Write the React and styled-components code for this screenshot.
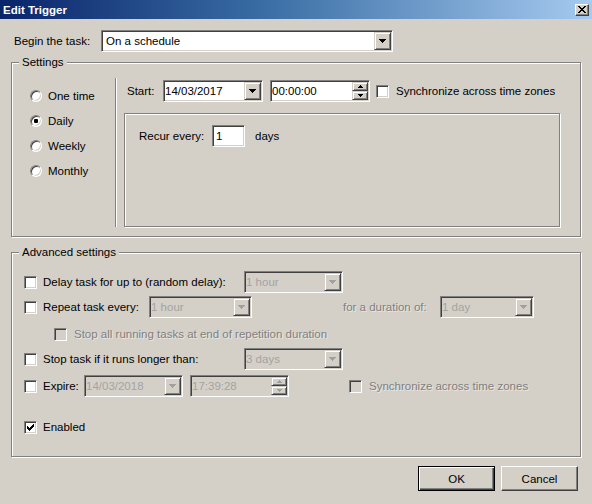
import React from "react";
import styled, { createGlobalStyle } from "styled-components";

const GlobalStyle = createGlobalStyle`
  html, body {
    margin: 0;
    padding: 0;
    background: #d4d0c8;
  }
  body {
    font-family: "Liberation Sans", Arial, sans-serif;
    font-size: 11.5px;
    color: #000;
  }
`;

const Window = styled.div`
  width: 592px;
  height: 504px;
  background: #d4d0c8;
  display: flex;
  flex-direction: column;
  overflow: hidden;
`;

const TitleBar = styled.div`
  height: 19px;
  flex: none;
  display: flex;
  align-items: center;
  justify-content: space-between;
  padding: 0 3px;
  background: linear-gradient(to right, #0a246a 0%, #3a6ea5 45%, #a6caf0 100%);
  color: #fff;
  font-weight: bold;
  font-size: 11.5px;
`;

const CloseButton = styled.span`
  box-sizing: border-box;
  width: 14px;
  height: 12px;
  background: #d4d0c8;
  border: 1px solid;
  border-color: #fff #404040 #404040 #fff;
  box-shadow: inset -1px -1px 0 #808080;
  display: flex;
  align-items: center;
  justify-content: center;
`;

const Body = styled.div`
  padding: 0 11px;
  display: flex;
  flex-direction: column;
`;

const Row = styled.div`
  display: flex;
  align-items: center;
  height: 22px;
  flex: none;
  margin-top: ${(p) => p.$mt || 0}px;
  padding-left: ${(p) => p.$indent || 0}px;
`;

const Label = styled.span`
  box-sizing: border-box;
  flex: none;
  width: ${(p) => (p.$w ? `${p.$w}px` : "auto")};
  margin-left: ${(p) => p.$ml || 0}px;
  padding-left: ${(p) => p.$pl || 0}px;
  color: ${(p) => (p.$disabled ? "#808080" : "#000")};
  text-shadow: ${(p) => (p.$disabled ? "1px 1px 0 rgba(255,255,255,0.5)" : "none")};
  white-space: nowrap;
`;

const Field = styled.div`
  box-sizing: border-box;
  flex: none;
  width: ${(p) => p.$w}px;
  height: 22px;
  margin-left: ${(p) => p.$ml || 0}px;
  display: flex;
  align-items: stretch;
  padding: 1px;
  background: ${(p) => (p.$disabled ? "#d4d0c8" : "#fff")};
  border: 1px solid;
  border-color: #808080 #fff #fff #808080;
  box-shadow: inset 1px 1px 0 #404040, inset -1px -1px 0 #d4d0c8;
  color: ${(p) => (p.$disabled ? "#a3a3a3" : "#000")};
`;

const FieldText = styled.span`
  flex: 1;
  display: flex;
  align-items: center;
  padding-left: ${(p) => p.$pad || 0}px;
  white-space: nowrap;
  overflow: hidden;
`;

const DropButton = styled.span`
  box-sizing: border-box;
  flex: none;
  width: 17px;
  background: #d4d0c8;
  border: 1px solid;
  border-color: #d4d0c8 #404040 #404040 #d4d0c8;
  box-shadow: inset 1px 1px 0 #fff, inset -1px -1px 0 #808080;
  display: flex;
  align-items: center;
  justify-content: center;
`;

const SpinColumn = styled.span`
  flex: none;
  width: 16px;
  display: flex;
  flex-direction: column;
`;

const SpinButton = styled(DropButton)`
  width: 16px;
  flex: 1;
`;

const Group = styled.div`
  position: relative;
  flex: none;
  border: 1px solid #808080;
  box-shadow: inset 1px 1px 0 #fff, 1px 1px 0 #fff;
  margin-top: ${(p) => p.$mt || 0}px;
`;

const GroupLabel = styled.span`
  position: absolute;
  top: -8px;
  left: 7px;
  padding: 0 3px;
  line-height: 14px;
  background: #d4d0c8;
`;

const SettingsContent = styled.div`
  display: flex;
  padding: 15px 0 9px 18px;
`;

const RadioColumn = styled.div`
  width: 85px;
  flex: none;
  padding-top: 5px;
  display: flex;
  flex-direction: column;
`;

const RadioRow = styled.div`
  height: 25px;
  display: flex;
  align-items: center;
`;

const Radio = styled.span`
  box-sizing: border-box;
  width: 12px;
  height: 12px;
  flex: none;
  border-radius: 50%;
  background: #fff;
  border: 1px solid;
  border-color: #808080 #fff #fff #808080;
  box-shadow: inset 1px 1px 0 #404040, inset -1px -1px 0 #d4d0c8;
  display: flex;
  align-items: center;
  justify-content: center;
  margin-right: 6px;
`;

const RadioDot = styled.span`
  width: 4px;
  height: 4px;
  border-radius: 1px;
  background: #000;
`;

const Separator = styled.div`
  width: 0;
  height: 149px;
  flex: none;
  border-left: 1px solid #808080;
  border-right: 1px solid #fff;
`;

const RightColumn = styled.div`
  width: 437px;
  flex: none;
  margin-left: 7px;
  padding-top: 2px;
  display: flex;
  flex-direction: column;
`;

const Panel = styled.div`
  box-sizing: border-box;
  height: 114px;
  margin-top: 11px;
  border: 1px solid #808080;
  box-shadow: inset 1px 1px 0 #fff, 1px 1px 0 #fff;
  padding: 11px 0 0 14px;
  width: 436px;
`;

const CheckBox = styled.span`
  box-sizing: border-box;
  width: 13px;
  height: 13px;
  flex: none;
  margin-left: ${(p) => p.$ml || 0}px;
  border: 1px solid;
  border-color: #808080 #fff #fff #808080;
  box-shadow: inset 1px 1px 0 #404040, inset -1px -1px 0 #d4d0c8;
  background: ${(p) => (p.$disabled ? "#d4d0c8" : "#fff")};
  display: flex;
  align-items: center;
  justify-content: center;
`;

const AdvancedContent = styled.div`
  display: flex;
  flex-direction: column;
  padding: 18px 0 18px 12px;
`;

const ButtonBar = styled.div`
  display: flex;
  justify-content: flex-end;
  gap: 6px;
  margin-top: 9px;
  padding-right: 3px;
`;

const Button = styled.span`
  box-sizing: border-box;
  width: 77px;
  height: 25px;
  display: flex;
  align-items: center;
  justify-content: center;
  background: #d4d0c8;
  border: 1px solid;
  border-color: ${(p) => (p.$default ? "#000" : "#fff #404040 #404040 #fff")};
  box-shadow: ${(p) =>
    p.$default
      ? "inset 1px 1px 0 #fff, inset -1px -1px 0 #404040, inset -2px -2px 0 #808080"
      : "inset -1px -1px 0 #808080, inset 1px 1px 0 #d4d0c8"};
`;

const Arrow = ({ color = "#000" }) => (
  <svg width="7" height="4" viewBox="0 0 7 4">
    <path d="M0 0h7v1h-1v1h-1v1h-1v1h-1v-1h-1v-1h-1v-1h-1z" fill={color} />
  </svg>
);

const SmallArrow = ({ up, color = "#000" }) => (
  <svg width="5" height="3" viewBox="0 0 5 3">
    {up ? (
      <path d="M2 0h1v1h1v1h1v1h-5v-1h1v-1h1z" fill={color} />
    ) : (
      <path d="M0 0h5v1h-1v1h-1v1h-1v-1h-1v-1h-1z" fill={color} />
    )}
  </svg>
);

const CheckMark = () => (
  <svg width="7" height="7" viewBox="0 0 7 7">
    <path
      d="M0 2h1v3h-1zM1 3h1v3h-1zM2 4h1v3h-1zM3 3h1v3h-1zM4 2h1v3h-1zM5 1h1v3h-1zM6 0h1v3h-1z"
      fill="#000"
    />
  </svg>
);

const Combo = ({ w, ml, value, disabled, pad }) => (
  <Field $w={w} $ml={ml} $disabled={disabled}>
    <FieldText $pad={pad}>{value}</FieldText>
    <DropButton>
      <Arrow color={disabled ? "#a0a0a0" : "#000"} />
    </DropButton>
  </Field>
);

const Spinner = ({ w, ml, value, disabled }) => (
  <Field $w={w} $ml={ml} $disabled={disabled}>
    <FieldText>{value}</FieldText>
    <SpinColumn>
      <SpinButton>
        <SmallArrow up color={disabled ? "#a0a0a0" : "#000"} />
      </SpinButton>
      <SpinButton>
        <SmallArrow color={disabled ? "#a0a0a0" : "#000"} />
      </SpinButton>
    </SpinColumn>
  </Field>
);

const schedules = ["One time", "Daily", "Weekly", "Monthly"];

export default function App() {
  return (
    <>
      <GlobalStyle />
      <Window>
        <TitleBar>
          <span>Edit Trigger</span>
          <CloseButton>
            <svg width="8" height="7" viewBox="0 0 8 7">
              <path
                d="M0 0h2v1h1v1h2v-1h1v-1h2v1h-1v1h-1v1h-1v1h1v1h1v1h1v1h-2v-1h-1v-1h-2v1h-1v1h-2v-1h1v-1h1v-1h1v-1h-1v-1h-1v-1h-1z"
                fill="#000"
              />
            </svg>
          </CloseButton>
        </TitleBar>
        <Body>
          <Row $mt={11}>
            <Label $w={90} $pl={3}>
              Begin the task:
            </Label>
            <Combo w={292} value="On a schedule" pad={3} />
          </Row>

          <Group $mt={10}>
            <GroupLabel>Settings</GroupLabel>
            <SettingsContent>
              <RadioColumn>
                {schedules.map((s) => (
                  <RadioRow key={s}>
                    <Radio>{s === "Daily" && <RadioDot />}</Radio>
                    <span>{s}</span>
                  </RadioRow>
                ))}
              </RadioColumn>
              <Separator />
              <RightColumn>
                <Row>
                  <Label $w={39} $pl={3}>
                    Start:
                  </Label>
                  <Combo w={100} value="14/03/2017" />
                  <Spinner w={100} ml={7} value="00:00:00" />
                  <CheckBox $ml={6} />
                  <Label $ml={7}>Synchronize across time zones</Label>
                </Row>
                <Panel>
                  <Row>
                    <Label $w={73}>Recur every:</Label>
                    <Field $w={33}>
                      <FieldText $pad={2}>1</FieldText>
                    </Field>
                    <Label $ml={10}>days</Label>
                  </Row>
                </Panel>
              </RightColumn>
            </SettingsContent>
          </Group>

          <Group $mt={15}>
            <GroupLabel>Advanced settings</GroupLabel>
            <AdvancedContent>
              <Row>
                <CheckBox />
                <Label $ml={6} $w={201}>
                  Delay task for up to (random delay):
                </Label>
                <Combo w={99} value="1 hour" disabled />
              </Row>
              <Row $mt={3}>
                <CheckBox />
                <Label $ml={6} $w={106}>
                  Repeat task every:
                </Label>
                <Combo w={103} value="1 hour" disabled />
                <Label $ml={91} $w={97} $disabled>
                  for a duration of:
                </Label>
                <Combo w={94} value="1 day" disabled />
              </Row>
              <Row $mt={5} $indent={30}>
                <CheckBox $disabled />
                <Label $ml={7} $disabled>
                  Stop all running tasks at end of repetition duration
                </Label>
              </Row>
              <Row $mt={3}>
                <CheckBox />
                <Label $ml={6} $w={201}>
                  Stop task if it runs longer than:
                </Label>
                <Combo w={99} value="3 days" disabled />
              </Row>
              <Row $mt={5}>
                <CheckBox />
                <Label $ml={6} $w={41}>
                  Expire:
                </Label>
                <Combo w={99} value="14/03/2018" disabled />
                <Spinner w={99} ml={7} value="17:39:28" disabled />
                <CheckBox $ml={60} $disabled />
                <Label $ml={7} $disabled>
                  Synchronize across time zones
                </Label>
              </Row>
              <Row $mt={19}>
                <CheckBox>
                  <CheckMark />
                </CheckBox>
                <Label $ml={6}>Enabled</Label>
              </Row>
            </AdvancedContent>
          </Group>

          <ButtonBar>
            <Button $default>OK</Button>
            <Button>Cancel</Button>
          </ButtonBar>
        </Body>
      </Window>
    </>
  );
}
